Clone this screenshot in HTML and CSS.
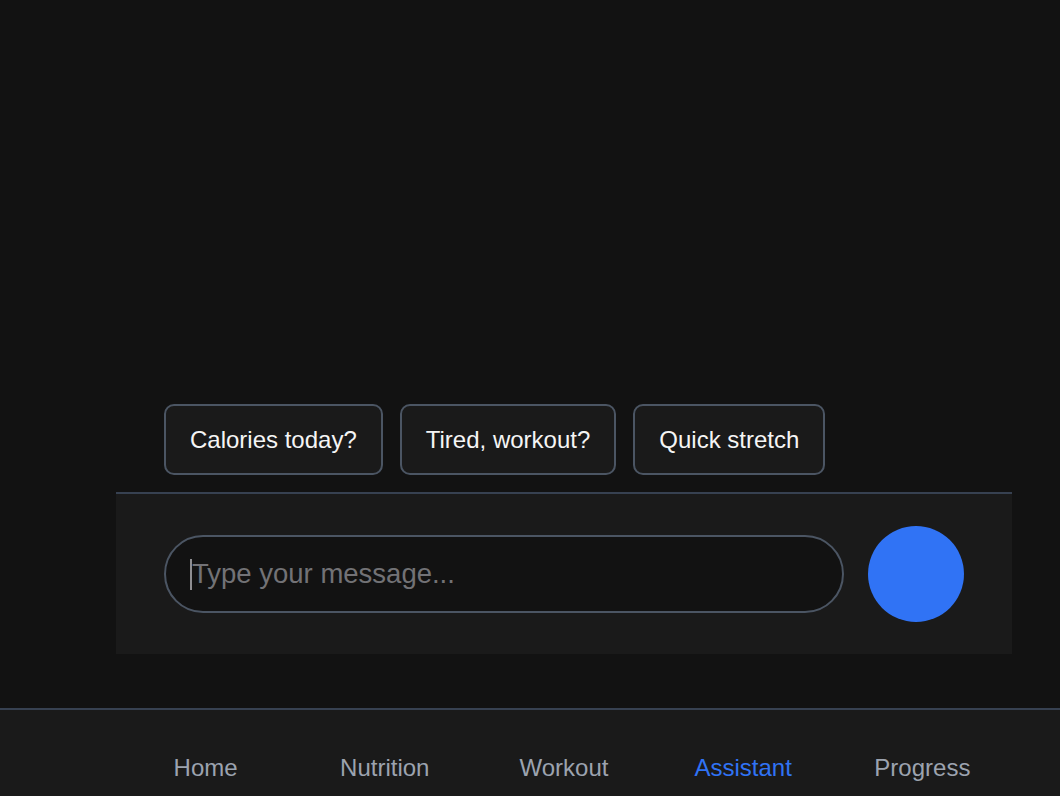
FILE: index.html
```html
<!DOCTYPE html>
<html lang="en">
<head>
<meta charset="utf-8">
<title>Assistant</title>
<link rel="stylesheet" href="styles.css">
</head>
<body>
<div class="app">
  <main class="chat">
    <div class="messages"></div>
    <div class="chips">
      <button class="chip">Calories today?</button>
      <button class="chip">Tired, workout?</button>
      <button class="chip">Quick stretch</button>
    </div>
    <div class="composer">
      <div class="field">
        <input class="input" type="text" placeholder="Type your message...">
      </div>
      <button class="send" aria-label="Send"></button>
    </div>
  </main>
  <nav class="tabbar">
    <div class="tabs">
      <a class="tab">Home</a>
      <a class="tab">Nutrition</a>
      <a class="tab">Workout</a>
      <a class="tab active">Assistant</a>
      <a class="tab">Progress</a>
    </div>
  </nav>
</div>
</body>
</html>
```
FILE: styles.css
```css
* { box-sizing: border-box; }
html, body {
  margin: 0;
  height: 100%;
  background: #121212;
  font-family: "Liberation Sans", Arial, Helvetica, sans-serif;
}
.app {
  height: 100vh;
  display: flex;
  flex-direction: column;
}
.chat {
  flex: 1;
  margin: 0 48px 0 116px;
  display: flex;
  flex-direction: column;
  padding-bottom: 54px;
  min-height: 0;
}
.messages { flex: 1; }
.chips {
  display: flex;
  gap: 17px;
  padding: 0 48px;
  margin-bottom: 17px;
}
.chip {
  font-family: inherit;
  font-size: 24px;
  line-height: 29px;
  color: #f5f5f5;
  background: #1a1a1a;
  border: 2px solid #4b5563;
  border-radius: 10px;
  padding: 19px 24px;
}
.composer {
  display: flex;
  align-items: center;
  gap: 24px;
  background: #1a1a1a;
  border-top: 2px solid #374151;
  padding: 32px 48px;
}
.field {
  position: relative;
  flex: 1;
  height: 78px;
  display: flex;
  align-items: center;
  background: #121212;
  border: 2px solid #4b5563;
  border-radius: 39px;
  padding: 0 26px;
}
.field::after {
  content: "";
  position: absolute;
  left: 24px;
  top: 22px;
  width: 2px;
  height: 31px;
  background: #8e8e92;
}
.input {
  flex: 1;
  min-width: 0;
  border: 0;
  outline: 0;
  background: transparent;
  font-family: inherit;
  font-size: 27.5px;
  color: #f5f5f5;
  padding: 0;
}
.input::placeholder { color: #727276; }
.send {
  flex: none;
  width: 96px;
  height: 96px;
  border-radius: 50%;
  border: 0;
  background: #3073f5;
  padding: 0;
}
.tabbar {
  flex: none;
  height: 88px;
  background: #1a1a1a;
  border-top: 2px solid #374151;
}
.tabs {
  margin: 0 48px 0 116px;
  display: grid;
  grid-template-columns: repeat(5, 1fr);
  padding-top: 44px;
}
.tab {
  text-align: center;
  font-size: 24px;
  line-height: 28px;
  color: #9ca3af;
}
.tab.active { color: #3073f5; }
```
